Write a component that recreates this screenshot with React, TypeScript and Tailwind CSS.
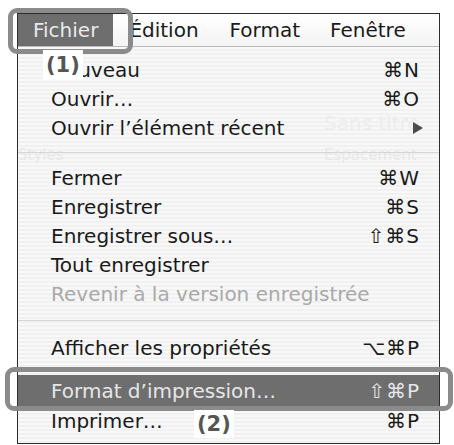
import React from "react";

type Item =
  | { kind: "item"; label: string; sc?: string; disabled?: boolean; hl?: boolean; arrow?: boolean }
  | { kind: "sep"; h: string };

const items: Item[] = [
  { kind: "item", label: "Nouveau", sc: "⌘N" },
  { kind: "item", label: "Ouvrir…", sc: "⌘O" },
  { kind: "item", label: "Ouvrir l’élément récent", arrow: true },
  { kind: "sep", h: "h-[21px]" },
  { kind: "item", label: "Fermer", sc: "⌘W" },
  { kind: "item", label: "Enregistrer", sc: "⌘S" },
  { kind: "item", label: "Enregistrer sous…", sc: "⇧⌘S" },
  { kind: "item", label: "Tout enregistrer" },
  { kind: "item", label: "Revenir à la version enregistrée", disabled: true },
  { kind: "sep", h: "h-[25px]" },
  { kind: "item", label: "Afficher les propriétés", sc: "⌥⌘P" },
  { kind: "sep", h: "h-[13px]" },
  { kind: "item", label: "Format d’impression…", sc: "⇧⌘P", hl: true },
  { kind: "item", label: "Imprimer…", sc: "⌘P" },
];

export default function App() {
  return (
    <div
      className="relative w-[454px] h-[445px] bg-white overflow-hidden pl-[17px] pt-[13px]"
      style={{ fontFamily: '"DejaVu Sans", "Liberation Sans", sans-serif' }}
    >
      <div className="relative w-[423px] h-[431px] border border-[#2e2e2e] bg-[repeating-linear-gradient(0deg,#f1f1f1_0px,#f1f1f1_2px,#f8f8f8_2px,#f8f8f8_4px)] flex flex-col">
        {/* ghost text of window behind */}
        <div className="absolute left-[306px] top-[94px] text-[20px] text-[#ededed]">Sans titre</div>
        <div className="absolute left-0 top-[130px] text-[15px] text-[#e8e8e8]">Styles</div>
        <div className="absolute left-[306px] top-[130px] text-[15px] text-[#e8e8e8]">Espacement</div>

        {/* menu bar */}
        <div className="relative flex items-center h-[33px] bg-[linear-gradient(#ffffff,#f4f4f4)] border-b border-[#b9b9b9] text-[20px] text-[#1a1a1a]">
          <div className="h-full flex items-center px-[15px] bg-[#6e6e6e] text-[#e9e9e9]">Fichier</div>
          <div className="pl-[16px]">Édition</div>
          <div className="pl-[31px]">Format</div>
          <div className="pl-[30px]">Fenêtre</div>
        </div>

        {/* items */}
        <div className="relative flex flex-col pt-[8px] text-[20px] text-[#1a1a1a]">
          {items.map((it, i) =>
            it.kind === "sep" ? (
              <div key={i} className={it.h + " flex items-center"}>
                <div className="w-full h-px bg-[#d6d6d6]" />
              </div>
            ) : (
              <div
                key={i}
                className={
                  "flex items-center justify-between pl-[33px] pr-[19px] " +
                  (it.hl
                    ? "h-[31px] bg-[#6e6e6e] text-[#e6e6e6]"
                    : it.disabled
                    ? "h-[29px] text-[#a9a9a9]"
                    : "h-[29px]")
                }
              >
                <span>{it.label}</span>
                {it.sc && <span className="tracking-[1px]">{it.sc}</span>}
                {it.arrow && (
                  <svg width="12" height="14" viewBox="0 0 12 14" className="mr-[-4px]">
                    <path d="M1 1 L11 7 L1 13 Z" fill="#4a4a4a" />
                  </svg>
                )}
              </div>
            )
          )}
        </div>
      </div>

      {/* callout 1 */}
      <div className="absolute left-[8px] top-[8px] w-[125px] h-[46px] border-[5px] border-[#8b8b8b] rounded-[9px]" />
      <div className="absolute left-[43px] top-[50px] h-[30px] px-[3px] bg-white text-[21px] font-bold text-[#555] leading-[30px]">
        (1)
      </div>

      {/* callout 2 */}
      <div className="absolute left-[5px] top-[367px] w-[448px] h-[44px] border-[5px] border-[#8b8b8b] rounded-[9px]" />
      <div className="absolute left-[194px] top-[410px] h-[28px] px-[3px] bg-white text-[21px] font-bold text-[#555] leading-[28px]">
        (2)
      </div>
    </div>
  );
}
